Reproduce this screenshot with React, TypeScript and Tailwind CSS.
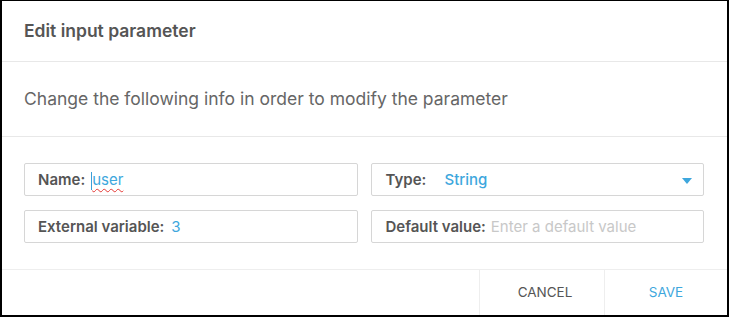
export default function App() {
  return (
    <div className="h-[317px] w-[729px] bg-white font-['Inter','Liberation_Sans',sans-serif]">
      <div className="flex h-full w-full flex-col border-t border-x-2 border-b-2 border-black">
        {/* Header */}
        <header className="flex h-[61px] items-center border-b border-[#e8e8e8] px-[22px]">
          <h1 className="text-[17.5px] font-semibold text-[#555]">Edit input parameter</h1>
        </header>

        {/* Description */}
        <div className="flex h-[75px] items-center border-b border-[#e8e8e8] px-[22px] pt-px">
          <p className="text-[17.5px] text-[#666]">Change the following info in order to modify the parameter</p>
        </div>

        {/* Form */}
        <div className="grid grid-cols-2 gap-x-[13px] gap-y-[14px] border-b border-[#eeeeee] pl-[22px] pr-[23px] pt-[26px] pb-[26px]">
          <div className="flex h-[33px] items-center rounded-[2px] border border-[#d6d6d6] px-[13px] pt-[2px] text-[15px]">
            <span className="font-semibold text-[#555]">Name:</span>
            <span className="ml-[6px] h-[18px] w-px bg-[#3a9fd8]" />
            <span className="text-[#3ea7dd] underline decoration-wavy decoration-[#e53935] decoration-1 underline-offset-[3px]">user</span>
          </div>
          <div className="flex h-[33px] items-center rounded-[2px] border border-[#d6d6d6] pl-[14px] pr-[11px] pt-[2px] text-[15px]">
            <span className="w-[59px] font-semibold text-[#555]">Type:</span>
            <span className="flex-1 font-medium text-[#3ea7dd]">String</span>
            <svg width="10" height="6" viewBox="0 0 10 6">
              <path d="M0 0 H10 L5 6 Z" fill="#3ea7dd" />
            </svg>
          </div>
          <div className="flex h-[33px] items-center rounded-[2px] border border-[#d6d6d6] px-[13px] pt-[2px] text-[15px]">
            <span className="font-semibold text-[#555]">External variable:</span>
            <span className="ml-[7px] text-[#3ea7dd]">3</span>
          </div>
          <div className="flex h-[33px] items-center rounded-[2px] border border-[#d6d6d6] px-[14px] pt-[2px] text-[15px]">
            <span className="font-semibold text-[#555]">Default value:</span>
            <span className="ml-[5px] text-[#c8c8c8]">Enter a default value</span>
          </div>
        </div>

        {/* Footer */}
        <footer className="flex flex-1 justify-end">
          <button className="w-[125px] border-l border-[#eeeeee] pl-[6px] text-[13.5px] text-[#555]">CANCEL</button>
          <button className="w-[123px] border-l border-[#eeeeee] text-[13.5px] text-[#3ea7dd]">SAVE</button>
        </footer>
      </div>
    </div>
  );
}
